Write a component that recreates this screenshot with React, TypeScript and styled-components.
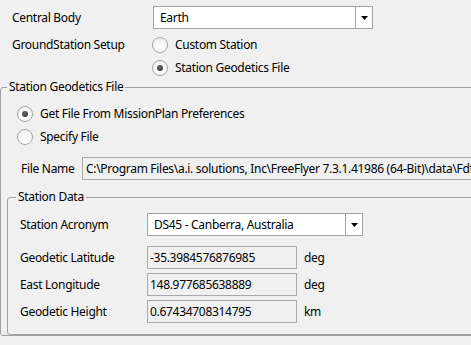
import React from 'react';
import styled, { createGlobalStyle } from 'styled-components';

const GlobalStyle = createGlobalStyle`
  html, body {
    margin: 0;
    padding: 0;
    background: #f0f0f0;
  }
  body {
    font-family: 'Noto Sans', 'Segoe UI', sans-serif;
    font-size: 12px;
    letter-spacing: -0.3px;
    color: #000;
    overflow: hidden;
  }
`;

const Page = styled.div`
  width: 471px;
  height: 345px;
  overflow: hidden;
  padding-top: 6px;
  box-sizing: border-box;
`;

const TopSection = styled.div`
  padding-left: 12px;
  display: flex;
  flex-direction: column;
  gap: 4px;
`;

const Row = styled.div<{ $top?: number; $indent?: number }>`
  display: flex;
  align-items: center;
  min-height: 23px;
  margin-top: ${({ $top }) => $top ?? 0}px;
  padding-left: ${({ $indent }) => $indent ?? 0}px;
`;

const SetupRow = styled.div`
  display: flex;
  align-items: flex-start;
`;

const Label = styled.span<{ $width: number }>`
  width: ${({ $width }) => $width}px;
  flex-shrink: 0;
  line-height: 23px;
  white-space: nowrap;
`;

const Combo = styled.div<{ $width: number }>`
  width: ${({ $width }) => $width}px;
  height: 23px;
  box-sizing: border-box;
  border: 1px solid #a2a2a2;
  background: #fff;
  display: flex;
  align-items: stretch;
`;

const ComboText = styled.span`
  flex: 1;
  padding-left: 6px;
  line-height: 21px;
  white-space: nowrap;
  overflow: hidden;
`;

const ComboButton = styled.span`
  width: 16px;
  border-left: 1px solid #a2a2a2;
  display: flex;
  align-items: center;
  justify-content: center;
`;

const TextBox = styled.div<{ $width: number; $pad?: number }>`
  width: ${({ $width }) => $width}px;
  height: 23px;
  box-sizing: border-box;
  border: 1px solid #a9a9a9;
  background: #f0f0f0;
  padding-left: ${({ $pad }) => $pad ?? 2}px;
  line-height: 21px;
  white-space: nowrap;
  overflow: hidden;
  flex-shrink: 0;
`;

const Unit = styled.span`
  margin-left: 7px;
`;

const RadioList = styled.div<{ $indent?: number }>`
  display: flex;
  flex-direction: column;
  padding-left: ${({ $indent }) => $indent ?? 0}px;
`;

const RadioItem = styled.label`
  display: flex;
  align-items: center;
  height: 23px;
  gap: 7px;
  white-space: nowrap;
`;

const RadioCircle = styled.span<{ $checked?: boolean }>`
  width: 16px;
  height: 16px;
  box-sizing: border-box;
  border-radius: 50%;
  border: 1px solid #a3a3a3;
  background: linear-gradient(#f4f4f4, #ffffff);
  display: flex;
  align-items: center;
  justify-content: center;
  flex-shrink: 0;

  &::after {
    content: '';
    display: ${({ $checked }) => ($checked ? 'block' : 'none')};
    width: 6px;
    height: 6px;
    border-radius: 50%;
    background: radial-gradient(circle at 40% 35%, #6a6a6a, #2a2a2a);
  }
`;

const Group = styled.fieldset<{ $left?: number; $top?: number; $bottom?: number }>`
  margin: ${({ $top }) => $top ?? 0}px 0 0 ${({ $left }) => $left ?? 0}px;
  padding: 0 0 ${({ $bottom }) => $bottom ?? 0}px 0;
  border: 1px solid #a0a0a0;
  border-radius: 3px;
  width: 520px;
  min-width: 0;
  box-sizing: border-box;
`;

const Legend = styled.legend<{ $indent: number }>`
  margin-left: ${({ $indent }) => $indent}px;
  padding: 0 2px;
  line-height: 16px;
`;

const GroupBody = styled.div<{ $top: number; $left: number }>`
  padding-top: ${({ $top }) => $top}px;
  padding-left: ${({ $left }) => $left}px;
  display: flex;
  flex-direction: column;
`;

const FieldList = styled.div`
  display: flex;
  flex-direction: column;
  gap: 4px;
  margin-top: 10px;
`;

const Arrow = () => (
  <svg width="7" height="4" viewBox="0 0 7 4">
    <polygon points="0,0 7,0 3.5,4" fill="#000" />
  </svg>
);

type RadioProps = { checked?: boolean; label: string };

const Radio = ({ checked, label }: RadioProps) => (
  <RadioItem>
    <RadioCircle $checked={checked} />
    <span>{label}</span>
  </RadioItem>
);

const DropDown = ({ width, value }: { width: number; value: string }) => (
  <Combo $width={width}>
    <ComboText>{value}</ComboText>
    <ComboButton>
      <Arrow />
    </ComboButton>
  </Combo>
);

const fields = [
  { label: 'Geodetic Latitude', value: '-35.3984576876985', unit: 'deg' },
  { label: 'East Longitude', value: '148.977685638889', unit: 'deg' },
  { label: 'Geodetic Height', value: '0.67434708314795', unit: 'km' },
];

export default function App() {
  return (
    <>
      <GlobalStyle />
      <Page>
        <TopSection>
          <Row>
            <Label $width={141}>Central Body</Label>
            <DropDown width={220} value="Earth" />
          </Row>
          <SetupRow>
            <Label $width={140}>GroundStation Setup</Label>
            <RadioList>
              <Radio label="Custom Station" />
              <Radio checked label="Station Geodetics File" />
            </RadioList>
          </SetupRow>
        </TopSection>

        <Group>
          <Legend $indent={6}>Station Geodetics File</Legend>
          <GroupBody $top={7} $left={0}>
            <RadioList $indent={16}>
              <Radio checked label="Get File From MissionPlan Preferences" />
              <Radio label="Specify File" />
            </RadioList>
            <Row $top={9} $indent={20}>
              <Label $width={61}>File Name</Label>
              <TextBox $width={420} $pad={3}>
                C:\Program Files\a.i. solutions, Inc\FreeFlyer 7.3.1.41986 (64-Bit)\data\Fdf\Station.dat
              </TextBox>
            </Row>
            <Group $left={6} $top={9} $bottom={11}>
              <Legend $indent={8}>Station Data</Legend>
              <GroupBody $top={8} $left={12}>
                <Row>
                  <Label $width={127}>Station Acronym</Label>
                  <DropDown width={216} value="DS45 - Canberra, Australia" />
                </Row>
                <FieldList>
                  {fields.map((f) => (
                    <Row key={f.label}>
                      <Label $width={127}>{f.label}</Label>
                      <TextBox $width={150}>{f.value}</TextBox>
                      <Unit>{f.unit}</Unit>
                    </Row>
                  ))}
                </FieldList>
              </GroupBody>
            </Group>
          </GroupBody>
        </Group>
      </Page>
    </>
  );
}
